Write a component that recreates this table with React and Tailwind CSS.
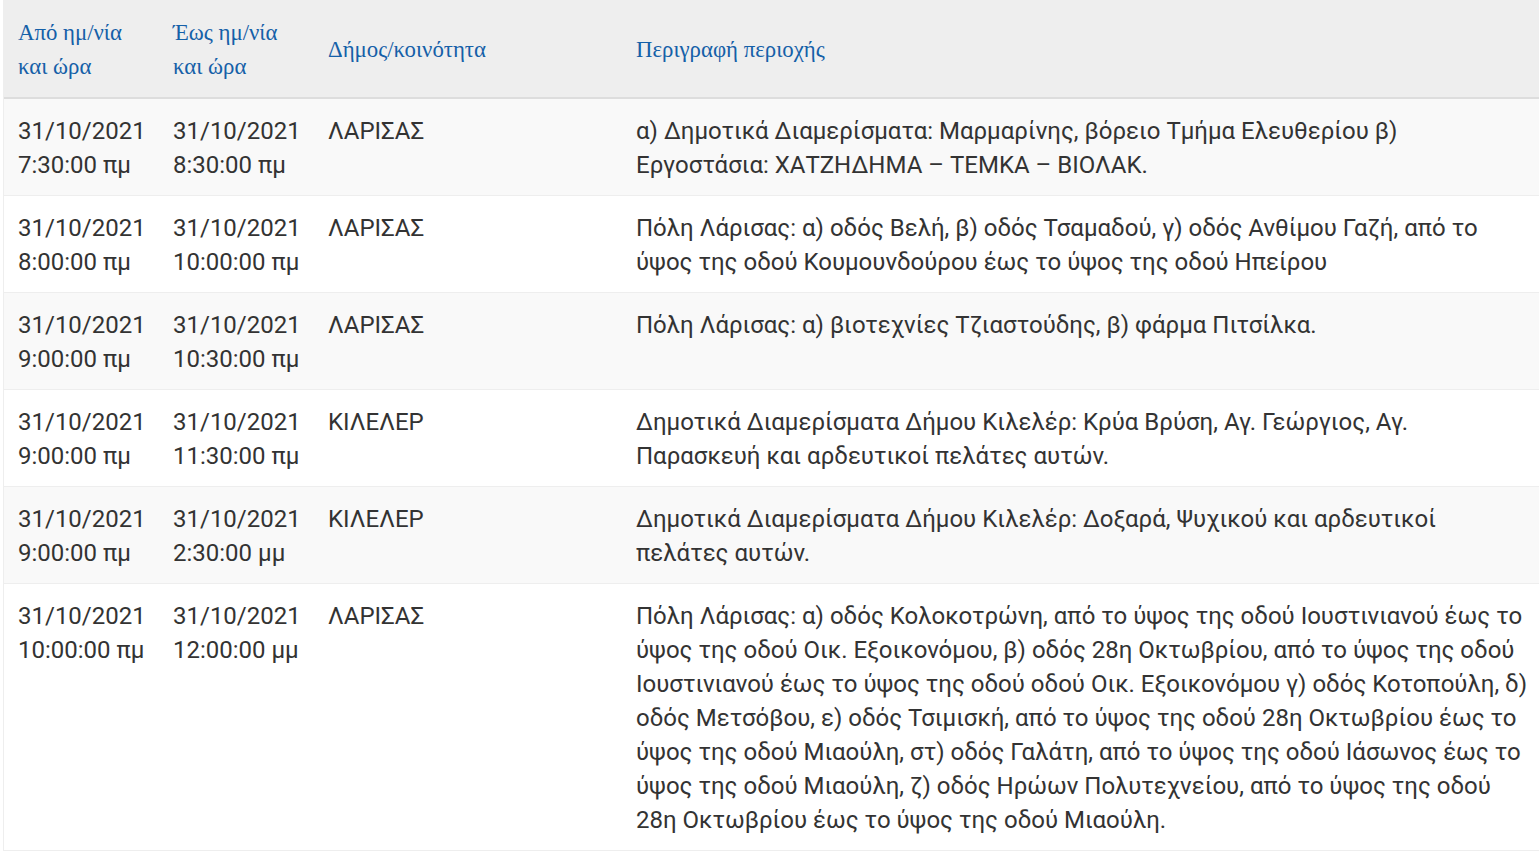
const ROWS = [
  {
    from: ['31/10/2021', '7:30:00 πμ'],
    to: ['31/10/2021', '8:30:00 πμ'],
    area: 'ΛΑΡΙΣΑΣ',
    desc: 'α) Δημοτικά Διαμερίσματα: Μαρμαρίνης, βόρειο Τμήμα Ελευθερίου β) Εργοστάσια: ΧΑΤΖΗΔΗΜΑ – ΤΕΜΚΑ – ΒΙΟΛΑΚ.',
  },
  {
    from: ['31/10/2021', '8:00:00 πμ'],
    to: ['31/10/2021', '10:00:00 πμ'],
    area: 'ΛΑΡΙΣΑΣ',
    desc: 'Πόλη Λάρισας: α) οδός Βελή, β) οδός Τσαμαδού, γ) οδός Ανθίμου Γαζή, από το ύψος της οδού Κουμουνδούρου έως το ύψος της οδού Ηπείρου',
  },
  {
    from: ['31/10/2021', '9:00:00 πμ'],
    to: ['31/10/2021', '10:30:00 πμ'],
    area: 'ΛΑΡΙΣΑΣ',
    desc: 'Πόλη Λάρισας: α) βιοτεχνίες Τζιαστούδης, β) φάρμα Πιτσίλκα.',
  },
  {
    from: ['31/10/2021', '9:00:00 πμ'],
    to: ['31/10/2021', '11:30:00 πμ'],
    area: 'ΚΙΛΕΛΕΡ',
    desc: 'Δημοτικά Διαμερίσματα Δήμου Κιλελέρ: Κρύα Βρύση, Αγ. Γεώργιος, Αγ. Παρασκευή και αρδευτικοί πελάτες αυτών.',
  },
  {
    from: ['31/10/2021', '9:00:00 πμ'],
    to: ['31/10/2021', '2:30:00 μμ'],
    area: 'ΚΙΛΕΛΕΡ',
    desc: 'Δημοτικά Διαμερίσματα Δήμου Κιλελέρ: Δοξαρά, Ψυχικού και αρδευτικοί πελάτες αυτών.',
  },
  {
    from: ['31/10/2021', '10:00:00 πμ'],
    to: ['31/10/2021', '12:00:00 μμ'],
    area: 'ΛΑΡΙΣΑΣ',
    desc: 'Πόλη Λάρισας: α) οδός Κολοκοτρώνη, από το ύψος της οδού Ιουστινιανού έως το ύψος της οδού Οικ. Εξοικονόμου, β) οδός 28η Οκτωβρίου, από το ύψος της οδού Ιουστινιανού έως το ύψος της οδού οδού Οικ. Εξοικονόμου γ) οδός Κοτοπούλη, δ) οδός Μετσόβου, ε) οδός Τσιμισκή, από το ύψος της οδού 28η Οκτωβρίου έως το ύψος της οδού Μιαούλη, στ) οδός Γαλάτη, από το ύψος της οδού Ιάσωνος έως το ύψος της οδού Μιαούλη, ζ) οδός Ηρώων Πολυτεχνείου, από το ύψος της οδού 28η Οκτωβρίου έως το ύψος της οδού Μιαούλη.',
  },
];

const GRID = 'grid grid-cols-[155px_155px_308px_1fr]';

function App() {
  return (
    <div className="min-h-screen bg-white">
      <div className="ml-[3px] w-[1536px] border-l border-[#eeeeee]">
        <div className={`${GRID} items-center border-b-2 border-[#dddddd] bg-[#eeeeee] pt-[16px] pb-[13px] font-['Liberation_Serif',serif] text-[22.8px] leading-[34px] text-[#1560a8]`}>
          <div className="pl-[14px]">Από ημ/νία<br />και ώρα</div>
          <div className="pl-[14px]">Έως ημ/νία<br />και ώρα</div>
          <div className="pl-[14px]">Δήμος/κοινότητα</div>
          <div className="pl-[14px]">Περιγραφή περιοχής</div>
        </div>
        {ROWS.map((row, i) => (
          <div
            key={i}
            className={`${GRID} border-b border-[#eeeeee] pt-[15px] pb-[13px] font-['Roboto',sans-serif] text-[24px] leading-[34px] text-[#333333] ${i % 2 === 0 ? 'bg-[#f9f9f9]' : 'bg-white'}`}
          >
            <div className="whitespace-nowrap pl-[14px]">{row.from[0]}<br />{row.from[1]}</div>
            <div className="whitespace-nowrap pl-[14px]">{row.to[0]}<br />{row.to[1]}</div>
            <div className="pl-[14px]">{row.area}</div>
            <div className="pl-[14px] pr-[8px]">{row.desc}</div>
          </div>
        ))}
      </div>
    </div>
  );
}

export default App;
